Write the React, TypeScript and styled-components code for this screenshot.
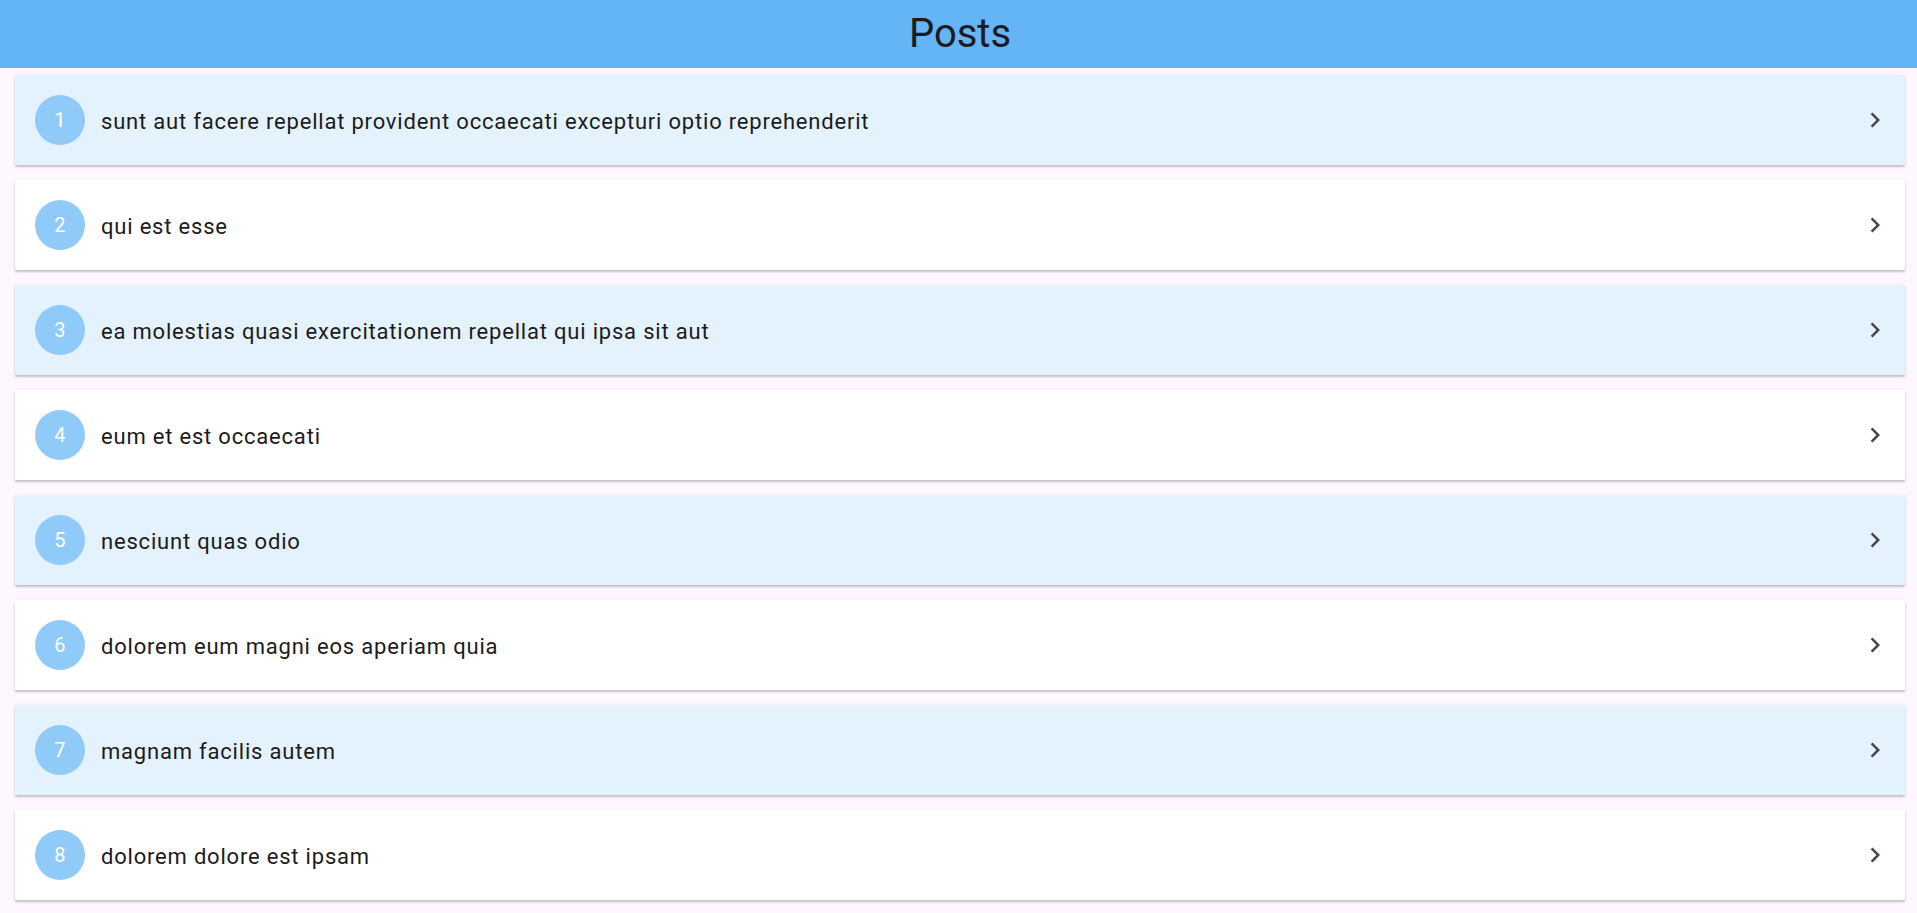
import React from "react";
import styled, { createGlobalStyle } from "styled-components";

const GlobalStyle = createGlobalStyle`
  html, body {
    margin: 0;
    padding: 0;
    background: #fef7ff;
    overflow: hidden;
  }
  body {
    font-family: Roboto, "Noto Sans", "Liberation Sans", sans-serif;
    -webkit-font-smoothing: antialiased;
  }
`;

const Page = styled.div`
  display: flex;
  flex-direction: column;
  width: 100%;
  min-height: 913px;
  background: #fef7ff;
`;

const AppBar = styled.header`
  height: 68px;
  flex: 0 0 68px;
  background: #64b5f6;
  display: flex;
  align-items: center;
  justify-content: center;
`;

const Title = styled.h1`
  margin: 0;
  font-family: Roboto, sans-serif;
  font-weight: 400;
  font-size: 40px;
  line-height: 1;
  color: #1d1b20;
  padding-left: 3px;
`;

const List = styled.main`
  display: flex;
  flex-direction: column;
  gap: 15px;
  padding: 7px 12px 0 15px;
`;

const Card = styled.div<{ $tinted: boolean }>`
  height: 90px;
  box-sizing: border-box;
  display: flex;
  align-items: center;
  padding: 0 15px 0 20px;
  background: ${(p) => (p.$tinted ? "#e3f2fd" : "#ffffff")};
  border-radius: 1px;
  box-shadow: 0 2px 2px rgba(0, 0, 0, 0.18), 0 1px 4px rgba(0, 0, 0, 0.08);
`;

const Avatar = styled.div`
  width: 50px;
  height: 50px;
  flex: 0 0 50px;
  border-radius: 50%;
  background: #90caf9;
  color: #ffffff;
  display: flex;
  align-items: center;
  justify-content: center;
  font-size: 20px;
  letter-spacing: 0.19px;
  font-weight: 400;
`;

const PostTitle = styled.span`
  flex: 1;
  margin-left: 16px;
  padding-top: 2px;
  font-size: 22px;
  letter-spacing: 0.8px;
  color: #1d1b20;
  white-space: nowrap;
  overflow: hidden;
  text-overflow: ellipsis;
`;

const Chevron = styled.svg`
  width: 30px;
  height: 30px;
  flex: 0 0 30px;
  fill: #49454f;
`;

const posts = [
  "sunt aut facere repellat provident occaecati excepturi optio reprehenderit",
  "qui est esse",
  "ea molestias quasi exercitationem repellat qui ipsa sit aut",
  "eum et est occaecati",
  "nesciunt quas odio",
  "dolorem eum magni eos aperiam quia",
  "magnam facilis autem",
  "dolorem dolore est ipsam",
];

export default function App() {
  return (
    <>
      <GlobalStyle />
      <Page>
        <AppBar>
          <Title>Posts</Title>
        </AppBar>
        <List>
          {posts.map((t, i) => (
            <Card key={i} $tinted={i % 2 === 0}>
              <Avatar>{i + 1}</Avatar>
              <PostTitle>{t}</PostTitle>
              <Chevron viewBox="0 0 24 24">
                <path d="M10 6L8.59 7.41 13.17 12l-4.58 4.59L10 18l6-6z" />
              </Chevron>
            </Card>
          ))}
        </List>
      </Page>
    </>
  );
}
